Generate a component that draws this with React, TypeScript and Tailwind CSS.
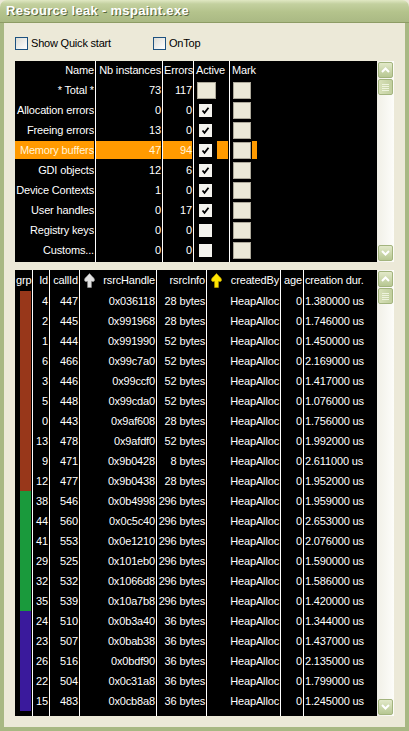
import React from 'react';

type TopRow = { name: string; nb: number; err: number; active: 'box' | 'on' | 'off'; sel?: boolean };

const topRows: TopRow[] = [
  { name: '* Total *', nb: 73, err: 117, active: 'box' },
  { name: 'Allocation errors', nb: 0, err: 0, active: 'on' },
  { name: 'Freeing errors', nb: 13, err: 0, active: 'on' },
  { name: 'Memory buffers', nb: 47, err: 94, active: 'on', sel: true },
  { name: 'GDI objects', nb: 12, err: 6, active: 'on' },
  { name: 'Device Contexts', nb: 1, err: 0, active: 'on' },
  { name: 'User handles', nb: 0, err: 17, active: 'on' },
  { name: 'Registry keys', nb: 0, err: 0, active: 'off' },
  { name: 'Customs...', nb: 0, err: 0, active: 'off' },
];

const BROWN = '#98371a';
const GREEN = '#1a9a3c';
const PURPLE = '#3a1a9c';

// grp, id, callId, handle, info, dur
const leaks: [string, number, number, string, string, string][] = [
  [BROWN, 4, 447, '0x036118', '28 bytes', '1.380000'],
  [BROWN, 2, 445, '0x991968', '28 bytes', '1.746000'],
  [BROWN, 1, 444, '0x991990', '52 bytes', '1.450000'],
  [BROWN, 6, 466, '0x99c7a0', '52 bytes', '2.169000'],
  [BROWN, 3, 446, '0x99ccf0', '52 bytes', '1.417000'],
  [BROWN, 5, 448, '0x99cda0', '52 bytes', '1.076000'],
  [BROWN, 0, 443, '0x9af608', '28 bytes', '1.756000'],
  [BROWN, 13, 478, '0x9afdf0', '52 bytes', '1.992000'],
  [BROWN, 9, 471, '0x9b0428', '8 bytes', '2.611000'],
  [BROWN, 12, 477, '0x9b0438', '28 bytes', '1.952000'],
  [GREEN, 38, 546, '0x0b4998', '296 bytes', '1.959000'],
  [GREEN, 44, 560, '0x0c5c40', '296 bytes', '2.653000'],
  [GREEN, 41, 553, '0x0e1210', '296 bytes', '2.076000'],
  [GREEN, 29, 525, '0x101eb0', '296 bytes', '1.590000'],
  [GREEN, 32, 532, '0x1066d8', '296 bytes', '1.586000'],
  [GREEN, 35, 539, '0x10a7b8', '296 bytes', '1.420000'],
  [PURPLE, 24, 510, '0x0b3a40', '36 bytes', '1.344000'],
  [PURPLE, 23, 507, '0x0bab38', '36 bytes', '1.437000'],
  [PURPLE, 26, 516, '0x0bdf90', '36 bytes', '2.135000'],
  [PURPLE, 22, 504, '0x0c31a8', '36 bytes', '1.799000'],
  [PURPLE, 15, 483, '0x0cb8a8', '36 bytes', '1.245000'],
];

function XpCheck({ label }: { label: string }) {
  return (
    <label className="flex items-center gap-[3px] text-[11px] text-black leading-none tracking-[-0.2px]">
      <span className="w-[13px] h-[13px] border border-[#1c5180] bg-gradient-to-br from-[#dcdcd5] to-white" />
      {label}
    </label>
  );
}

function ScrollBtn({ dir }: { dir: 'up' | 'down' }) {
  return (
    <div className="w-[15px] h-[16px] rounded-[2px] border border-[#a3b47e] bg-gradient-to-b from-[#e2e9c9] to-[#b7c792] flex items-center justify-center">
      <svg width="9" height="6" viewBox="0 0 9 6">
        <path
          d={dir === 'up' ? 'M1 5 L4.5 1.5 L8 5' : 'M1 1 L4.5 4.5 L8 1'}
          stroke="white"
          strokeWidth="2"
          fill="none"
        />
      </svg>
    </div>
  );
}

function ScrollBar() {
  return (
    <div className="w-[17px] flex flex-col items-center py-[1px] gap-[1px] bg-gradient-to-r from-[#f1f0e7] to-[#fdfdfa]">
      <ScrollBtn dir="up" />
      <div className="w-[15px] h-[16px] rounded-[2px] border border-[#a3b47e] bg-gradient-to-r from-[#d7e0b8] to-[#c1cf9e] flex flex-col items-center justify-center gap-[1px]">
        {[0, 1, 2, 3].map(i => (
          <span key={i} className="w-[7px] h-[1px] bg-[#eef3dd]" />
        ))}
      </div>
      <div className="flex-1" />
      <ScrollBtn dir="down" />
    </div>
  );
}

function Tick() {
  return (
    <svg width="9" height="9" viewBox="0 0 9 9">
      <path d="M1.5 4.5 L3.5 6.8 L7.5 1.8" stroke="black" strokeWidth="1.8" fill="none" />
    </svg>
  );
}

function SortArrow({ color }: { color: string }) {
  return (
    <svg width="11" height="15" viewBox="0 0 11 15">
      <path
        d="M5.5 0.5 C7 2.6 10.5 4.8 10.5 6.9 C10.5 8.3 9.3 8.9 7.4 8.3 L7.4 14.5 L3.6 14.5 L3.6 8.3 C1.7 8.9 0.5 8.3 0.5 6.9 C0.5 4.8 4 2.6 5.5 0.5 Z"
        fill={color}
        stroke={color === '#ffe600' ? '#c8a800' : '#9a9a9a'}
        strokeWidth="0.6"
      />
    </svg>
  );
}

function TopTable() {
  const line = 'border-r border-white';
  return (
    <div className="flex-1 bg-black text-white text-[11px] flex flex-col tracking-[-0.15px]">
      <div className="flex h-[19px] leading-[19px]">
        <div className={`w-[81px] ${line} text-right pr-[1px]`}>Name</div>
        <div className={`w-[67px] ${line} text-right pr-[1px] whitespace-nowrap overflow-hidden`}>Nb instances</div>
        <div className={`w-[31px] ${line} text-right whitespace-nowrap overflow-hidden`}>Errors</div>
        <div className={`w-[36px] ${line} pl-[2px]`}>Active</div>
        <div className="w-[27px] pl-[2px]">Mark</div>
      </div>
      {topRows.map(r => {
        const hl = r.sel ? 'bg-[#ff9a00] text-[#fff4d6]' : '';
        return (
          <div key={r.name} className="flex h-[20px] leading-[18px]">
            <div className={`w-[81px] ${line} flex`}>
              <div className={`flex-1 my-[1px] mr-[1px] text-right whitespace-nowrap overflow-hidden ${hl}`}>{r.name}</div>
            </div>
            <div className={`w-[67px] ${line} flex`}>
              <div className={`flex-1 my-[1px] mr-[1px] text-right ${hl}`}>{r.nb}</div>
            </div>
            <div className={`w-[31px] ${line} flex`}>
              <div className={`flex-1 my-[1px] mr-[1px] text-right ${hl}`}>{r.err}</div>
            </div>
            <div className={`w-[36px] ${line} flex`}>
              <div className="w-[23px] flex items-center">
                {r.active === 'box' ? (
                  <span className="ml-[3px] w-[19px] h-[17px] border border-[#aca899] bg-[#ece9d8]" />
                ) : (
                  <span className="ml-[5px] w-[13px] h-[13px] bg-[#f4f3ee] flex items-center justify-center">
                    {r.active === 'on' && <Tick />}
                  </span>
                )}
              </div>
              <div className={`flex-1 my-[1px] mr-[1px] ${hl}`} />
            </div>
            <div className="w-[27px] flex">
              <div className="w-[22px] flex items-center">
                <span className="ml-[3px] w-[18px] h-[17px] border border-[#aca899] bg-[#ece9d8]" />
              </div>
              <div className={`flex-1 my-[1px] ${hl}`} />
            </div>
          </div>
        );
      })}
      <div className="flex flex-1">
        <div className={`w-[81px] ${line}`} />
        <div className={`w-[67px] ${line}`} />
        <div className={`w-[31px] ${line}`} />
        <div className={`w-[36px] ${line}`} />
      </div>
    </div>
  );
}

function LeakTable() {
  const line = 'border-r border-white';
  const cols = ['w-[18px]', 'w-[17px]', 'w-[30px]', 'w-[77px]', 'w-[50px]', 'w-[74px]', 'w-[23px]'];
  return (
    <div className="flex-1 bg-black text-white text-[11px] flex flex-col tracking-[-0.15px]">
      <div className="flex h-[21px] leading-[21px] whitespace-nowrap">
        <div className={`${cols[0]} ${line} pl-[1px]`}>grp</div>
        <div className={`${cols[1]} ${line} text-right pr-[1px]`}>Id</div>
        <div className={`${cols[2]} ${line} text-right pr-[1px]`}>callId</div>
        <div className={`${cols[3]} ${line} flex items-center justify-between pl-[4px] pr-[1px]`}>
          <SortArrow color="#e2e2e2" />
          <span>rsrcHandle</span>
        </div>
        <div className={`${cols[4]} ${line} text-right pr-[1px]`}>rsrcInfo</div>
        <div className={`${cols[5]} ${line} flex items-center justify-between pl-[4px] pr-[1px]`}>
          <SortArrow color="#ffe600" />
          <span>createdBy</span>
        </div>
        <div className={`${cols[6]} ${line} text-right pr-[1px]`}>age</div>
        <div className="flex-1 pl-[1px]">creation dur.</div>
      </div>
      {leaks.map(([grp, id, call, handle, info, dur]) => (
        <div key={id} className="flex h-[20px] leading-[20px] whitespace-nowrap">
          <div className={`${cols[0]} ${line} pl-[5px] pr-[1px]`}>
            <div className="h-full" style={{ background: grp }} />
          </div>
          <div className={`${cols[1]} ${line} text-right pr-[1px]`}>{id}</div>
          <div className={`${cols[2]} ${line} text-right pr-[1px]`}>{call}</div>
          <div className={`${cols[3]} ${line} text-right pr-[1px]`}>{handle}</div>
          <div className={`${cols[4]} ${line} text-right pr-[1px]`}>{info}</div>
          <div className={`${cols[5]} ${line} text-right pr-[1px]`}>HeapAlloc</div>
          <div className={`${cols[6]} ${line} text-right pr-[1px]`}>0</div>
          <div className="flex-1 pl-[1px]">{dur} us</div>
        </div>
      ))}
      <div className="flex flex-1">
        {cols.map((c, i) => (
          <div key={i} className={`${c} ${line}`} />
        ))}
      </div>
    </div>
  );
}

export default function App() {
  return (
    <div className="w-[409px] h-[731px] flex flex-col bg-[#ece9d8] overflow-hidden font-['Liberation_Sans',Arial,sans-serif]">
      <div className="h-[23px] shrink-0 rounded-t-[7px] border-b border-[#8d9c65] bg-[linear-gradient(to_bottom,#e0e8c3_0%,#c3d09f_18%,#b4c38c_55%,#aab984_100%)] flex items-center pl-[6px]">
        <span className="text-white font-bold text-[13px] tracking-[0.3px] [text-shadow:1px_1px_0_#59673b]">
          Resource leak - mspaint.exe
        </span>
      </div>
      <div className="flex-1 flex flex-col border-x-4 border-b-4 border-[#a8b883] px-[11px] pb-[11px]">
        <div className="h-[38px] shrink-0 flex items-start pt-[14px]">
          <div className="w-[138px]">
            <XpCheck label="Show Quick start" />
          </div>
          <XpCheck label="OnTop" />
        </div>
        <div className="h-[201px] shrink-0 flex">
          <TopTable />
          <ScrollBar />
        </div>
        <div className="flex-1 flex mt-[8px]">
          <LeakTable />
          <ScrollBar />
        </div>
      </div>
    </div>
  );
}
